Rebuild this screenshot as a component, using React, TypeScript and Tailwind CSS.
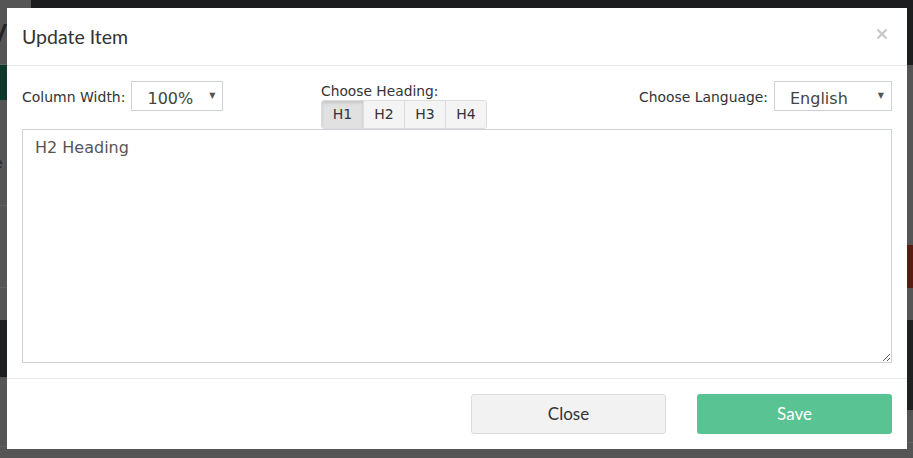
import { useState } from "react";

const sans = { fontFamily: '"DejaVu Sans", Verdana, sans-serif' };
const lato = { fontFamily: 'Lato, "Open Sans", sans-serif' };

function FakeSelect({ value, width }: { value: string; width: string }) {
  return (
    <div
      className={`${width} h-[30px] border border-[#cdd2da] bg-white flex items-center pl-[15px] pr-[7px] text-[16px] text-[#444]`}
      style={sans}
    >
      <span className="flex-1 leading-none pt-[5px]">{value}</span>
      <span className="text-[8px] text-[#555] leading-none">▼</span>
    </div>
  );
}

export default function App() {
  const [active, setActive] = useState("H1");
  const headings = ["H1", "H2", "H3", "H4"];

  return (
    <div className="relative w-[913px] h-[458px] overflow-hidden bg-[#555] flex">
      {/* dimmed page behind the dialog */}
      <div className="w-[7px] flex flex-col">
        <div className="h-[64px] bg-[#555] relative overflow-hidden">
          <span className="absolute left-[-12px] top-[14px] text-[34px] leading-none text-[#222]" style={sans}>y</span>
        </div>
        <div className="h-px bg-[#666]" />
        <div className="h-[35px] bg-[#0b3a2a]" />
        <div className="h-[105px] bg-[#555] relative overflow-hidden">
          <span className="absolute left-[-6px] top-[56px] text-[14px] leading-none text-[#222]" style={sans}>e</span>
        </div>
        <div className="h-px bg-[#626262]" />
        <div className="h-[81px] bg-[#555]" />
        <div className="h-px bg-[#626262]" />
        <div className="h-[32px] bg-[#555]" />
        <div className="h-[57px] bg-[#1e1f21]" />
        <div className="h-[69px] bg-[#555]" />
        <div className="h-px bg-[#626262]" />
        <div className="flex-1 bg-[#555]" />
      </div>
      <div className="flex-1 flex flex-col">
        <div className="h-[8px] flex">
          <div className="w-[24px] bg-[#555]" />
          <div className="flex-1 bg-[#1c1d1f]" />
        </div>
        <div className="flex-1" />
      </div>
      <div className="w-[7px] flex flex-col">
        <div className="h-[65px] bg-[#1c1d1f]" />
        <div className="h-[180px] bg-[#555]" />
        <div className="h-[43px] bg-[#5c1b12]" />
        <div className="h-[32px] bg-[#555]" />
        <div className="h-[90px] bg-[#1f2022]" />
        <div className="h-[32px] bg-[#555]" />
        <div className="h-px bg-[#646464]" />
        <div className="flex-1 bg-[#555]" />
      </div>

      {/* dialog */}
      <div className="absolute left-[7px] top-[8px] w-[900px] h-[441px] bg-white flex flex-col">
        <div className="h-[58px] border-b border-[#e8e8e8] flex items-center justify-between px-[15px]">
          <h4 className="text-[19.5px] text-[#333] pt-[1px]" style={lato}>Update Item</h4>
          <button className="w-[14px] h-[14px] mr-[3px] mb-[6px] flex items-center justify-center">
            <svg width="12" height="12" viewBox="0 0 12 12">
              <path d="M1.5 1.5 L10.5 10.5 M10.5 1.5 L1.5 10.5" stroke="#c9c9c9" strokeWidth="2.4" strokeLinecap="butt" />
            </svg>
          </button>
        </div>

        <div className="px-[15px] pt-[15px] pb-[15px]">
          <div className="grid grid-cols-3 items-start">
            <div className="flex items-center gap-[6px]">
              <label className="text-[14px] text-[#333] pt-[2px]" style={sans}>Column Width:</label>
              <FakeSelect value="100%" width="w-[92px]" />
            </div>
            <div className="pl-[9px] pt-px flex flex-col items-start">
              <label className="h-[18px] text-[13.8px] leading-[18px] text-[#333]" style={sans}>Choose Heading:</label>
              <div className="flex h-[29px] rounded-[3px] border border-[#dcdcdc] overflow-hidden" style={sans}>
                {headings.map((h, i) => (
                  <button
                    key={h}
                    onClick={() => setActive(h)}
                    className={`w-[41px] h-full text-[14px] text-[#333] ${i > 0 ? "border-l border-[#dcdcdc]" : ""} ${
                      active === h ? "bg-[#e1e1e1] shadow-[inset_0_2px_3px_rgba(0,0,0,0.12)]" : "bg-[#f4f4f4]"
                    }`}
                  >
                    {h}
                  </button>
                ))}
              </div>
            </div>
            <div className="justify-self-end flex items-center gap-[6px]">
              <label className="text-[13.9px] text-[#333] pt-[2px]" style={sans}>Choose Language:</label>
              <FakeSelect value="English" width="w-[118px]" />
            </div>
          </div>

          <textarea
            defaultValue="H2 Heading"
            className="block w-full h-[234px] border border-[#cdd2da] px-[12px] pt-[6px] text-[16px] leading-[24px] text-[#555] outline-none"
            style={sans}
          />
        </div>

        <div className="border-t border-[#e8e8e8] px-[15px] pt-[15px] flex justify-end gap-[31px]" style={lato}>
          <button className="w-[195px] h-[40px] rounded-[3px] border border-[#dcdcdc] bg-[#f2f2f2] text-[17px] text-[#333]">
            Close
          </button>
          <button className="w-[195px] h-[40px] rounded-[3px] bg-[#5ac393] text-[17px] text-white">
            Save
          </button>
        </div>
      </div>
    </div>
  );
}
